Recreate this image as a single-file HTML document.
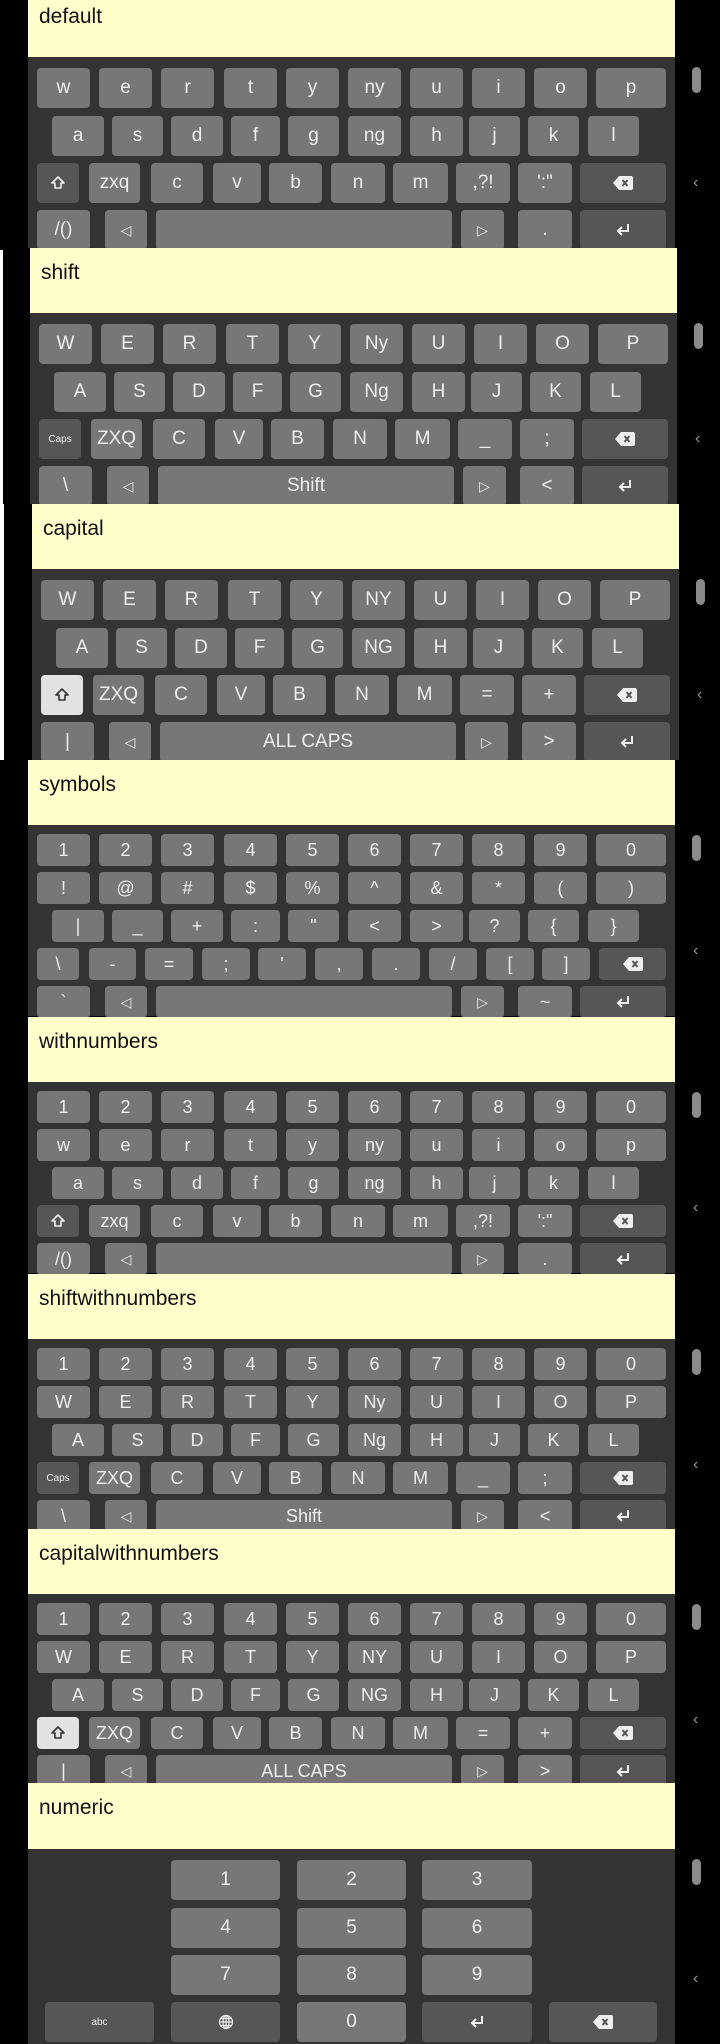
<!DOCTYPE html>
<html><head><meta charset="utf-8"><style>
*{margin:0;padding:0;box-sizing:border-box}
body{width:720px;height:2044px;background:#000;position:relative;overflow:hidden;font-family:"Liberation Sans",sans-serif}
.sec{position:absolute;left:0;width:720px;height:256px}
.y{position:absolute;left:28px;width:647px;top:0;height:65px;background:#ffffcc}
.lb{position:absolute;left:11px;top:13px;font-size:21px;line-height:24px;color:#111}
.kb{position:absolute;left:28px;width:647px;top:65px;height:191px;background:#333}
.k{position:absolute;height:40px;background:#777;border-radius:4px;color:#eee;font-size:19px;display:flex;align-items:center;justify-content:center}
.d{background:#565656}
.hl{background:#e2e2e2}
.r1{top:76px}.r2{top:124px}.r3{top:171px}.r4{top:218px}
.f{height:32px;font-size:18px}
.s1{top:74px}.s2{top:112px}.s3{top:150px}.s4{top:188px}.s5{top:226px}
.th{position:absolute;left:692px;top:75px;width:9px;height:26px;border-radius:5px;background:#8a8a8a}
.ch{position:absolute;left:693px;top:182px;color:#999;font-size:16px}
.sm{font-size:10px}
</style></head><body>

<!-- default -->
<div class="sec" style="top:-8px">
<div class="y"><div class="lb">default</div></div><div class="kb"></div>
<div class="k r1" style="left:37px;width:53px">w</div><div class="k r1" style="left:99px;width:53px">e</div><div class="k r1" style="left:161px;width:53px">r</div><div class="k r1" style="left:224px;width:53px">t</div><div class="k r1" style="left:286px;width:53px">y</div><div class="k r1" style="left:348px;width:53px">ny</div><div class="k r1" style="left:410px;width:53px">u</div><div class="k r1" style="left:472px;width:53px">i</div><div class="k r1" style="left:534px;width:53px">o</div><div class="k r1" style="left:596px;width:70px">p</div>
<div class="k r2" style="left:52px;width:52px">a</div><div class="k r2" style="left:112px;width:51px">s</div><div class="k r2" style="left:171px;width:52px">d</div><div class="k r2" style="left:231px;width:49px">f</div><div class="k r2" style="left:288px;width:51px">g</div><div class="k r2" style="left:348px;width:53px">ng</div><div class="k r2" style="left:410px;width:53px">h</div><div class="k r2" style="left:469px;width:51px">j</div><div class="k r2" style="left:528px;width:51px">k</div><div class="k r2" style="left:588px;width:51px">l</div>
<div class="k r3 d" style="left:37px;width:42px"><svg width="14" height="14" viewBox="0 0 14 14"><path d="M7 1L1 7H4V12H10V7H13Z" fill="none" stroke="#eee" stroke-width="1.6" stroke-linejoin="round"/></svg></div><div class="k r3" style="left:89px;width:51px">zxq</div><div class="k r3" style="left:151px;width:52px">c</div><div class="k r3" style="left:213px;width:48px">v</div><div class="k r3" style="left:269px;width:53px">b</div><div class="k r3" style="left:331px;width:54px">n</div><div class="k r3" style="left:393px;width:55px">m</div><div class="k r3" style="left:456px;width:54px">,?!</div><div class="k r3" style="left:518px;width:54px">':"</div><div class="k r3 d" style="left:580px;width:86px"><svg width="20" height="14" viewBox="0 0 20 14"><path d="M6 0H18a2 2 0 0 1 2 2V12a2 2 0 0 1-2 2H6L0 7Z" fill="#eee"/><path d="M9.5 4l5 6M14.5 4l-5 6" stroke="#555" stroke-width="2"/></svg></div>
<div class="k r4" style="left:37px;width:53px">/()</div><div class="k r4" style="left:105px;width:42px;font-size:14px">◁</div><div class="k r4" style="left:156px;width:296px"></div><div class="k r4" style="left:461px;width:43px;font-size:14px">▷</div><div class="k r4" style="left:518px;width:54px">.</div><div class="k r4 d" style="left:580px;width:86px"><svg width="18" height="14" viewBox="0 0 18 14"><path d="M14 1V8H4M8 4L4 8L8 12" fill="none" stroke="#eee" stroke-width="2"/></svg></div>
<div class="th"></div><div class="ch">‹</div>
</div>

<div style="position:absolute;left:0;top:250px;width:3px;height:254px;background:#fff"></div>
<div style="position:absolute;left:0;top:504px;width:4px;height:256px;background:#fff"></div>

<!-- shift -->
<div class="sec" style="top:248px;left:2px">
<div class="y"><div class="lb">shift</div></div><div class="kb"></div>
<div class="k r1" style="left:37px;width:53px">W</div><div class="k r1" style="left:99px;width:53px">E</div><div class="k r1" style="left:161px;width:53px">R</div><div class="k r1" style="left:224px;width:53px">T</div><div class="k r1" style="left:286px;width:53px">Y</div><div class="k r1" style="left:348px;width:53px">Ny</div><div class="k r1" style="left:410px;width:53px">U</div><div class="k r1" style="left:472px;width:53px">I</div><div class="k r1" style="left:534px;width:53px">O</div><div class="k r1" style="left:596px;width:70px">P</div>
<div class="k r2" style="left:52px;width:52px">A</div><div class="k r2" style="left:112px;width:51px">S</div><div class="k r2" style="left:171px;width:52px">D</div><div class="k r2" style="left:231px;width:49px">F</div><div class="k r2" style="left:288px;width:51px">G</div><div class="k r2" style="left:348px;width:53px">Ng</div><div class="k r2" style="left:410px;width:53px">H</div><div class="k r2" style="left:469px;width:51px">J</div><div class="k r2" style="left:528px;width:51px">K</div><div class="k r2" style="left:588px;width:51px">L</div>
<div class="k r3 d sm" style="left:37px;width:42px">Caps</div><div class="k r3" style="left:89px;width:51px">ZXQ</div><div class="k r3" style="left:151px;width:52px">C</div><div class="k r3" style="left:213px;width:48px">V</div><div class="k r3" style="left:269px;width:53px">B</div><div class="k r3" style="left:331px;width:54px">N</div><div class="k r3" style="left:393px;width:55px">M</div><div class="k r3" style="left:456px;width:54px">_</div><div class="k r3" style="left:518px;width:54px">;</div><div class="k r3 d" style="left:580px;width:86px"><svg width="20" height="14" viewBox="0 0 20 14"><path d="M6 0H18a2 2 0 0 1 2 2V12a2 2 0 0 1-2 2H6L0 7Z" fill="#eee"/><path d="M9.5 4l5 6M14.5 4l-5 6" stroke="#555" stroke-width="2"/></svg></div>
<div class="k r4" style="left:37px;width:53px">\</div><div class="k r4" style="left:105px;width:42px;font-size:14px">◁</div><div class="k r4" style="left:156px;width:296px">Shift</div><div class="k r4" style="left:461px;width:43px;font-size:14px">▷</div><div class="k r4" style="left:518px;width:54px">&lt;</div><div class="k r4 d" style="left:580px;width:86px"><svg width="18" height="14" viewBox="0 0 18 14"><path d="M14 1V8H4M8 4L4 8L8 12" fill="none" stroke="#eee" stroke-width="2"/></svg></div>
<div class="th"></div><div class="ch">‹</div>
</div>

<!-- capital -->
<div class="sec" style="top:504px;left:4px">
<div class="y"><div class="lb">capital</div></div><div class="kb"></div>
<div class="k r1" style="left:37px;width:53px">W</div><div class="k r1" style="left:99px;width:53px">E</div><div class="k r1" style="left:161px;width:53px">R</div><div class="k r1" style="left:224px;width:53px">T</div><div class="k r1" style="left:286px;width:53px">Y</div><div class="k r1" style="left:348px;width:53px">NY</div><div class="k r1" style="left:410px;width:53px">U</div><div class="k r1" style="left:472px;width:53px">I</div><div class="k r1" style="left:534px;width:53px">O</div><div class="k r1" style="left:596px;width:70px">P</div>
<div class="k r2" style="left:52px;width:52px">A</div><div class="k r2" style="left:112px;width:51px">S</div><div class="k r2" style="left:171px;width:52px">D</div><div class="k r2" style="left:231px;width:49px">F</div><div class="k r2" style="left:288px;width:51px">G</div><div class="k r2" style="left:348px;width:53px">NG</div><div class="k r2" style="left:410px;width:53px">H</div><div class="k r2" style="left:469px;width:51px">J</div><div class="k r2" style="left:528px;width:51px">K</div><div class="k r2" style="left:588px;width:51px">L</div>
<div class="k r3 hl" style="left:37px;width:42px"><svg width="14" height="14" viewBox="0 0 14 14"><path d="M7 1L1 7H4V12H10V7H13Z" fill="none" stroke="#333" stroke-width="1.6" stroke-linejoin="round"/></svg></div><div class="k r3" style="left:89px;width:51px">ZXQ</div><div class="k r3" style="left:151px;width:52px">C</div><div class="k r3" style="left:213px;width:48px">V</div><div class="k r3" style="left:269px;width:53px">B</div><div class="k r3" style="left:331px;width:54px">N</div><div class="k r3" style="left:393px;width:55px">M</div><div class="k r3" style="left:456px;width:54px">=</div><div class="k r3" style="left:518px;width:54px">+</div><div class="k r3 d" style="left:580px;width:86px"><svg width="20" height="14" viewBox="0 0 20 14"><path d="M6 0H18a2 2 0 0 1 2 2V12a2 2 0 0 1-2 2H6L0 7Z" fill="#eee"/><path d="M9.5 4l5 6M14.5 4l-5 6" stroke="#555" stroke-width="2"/></svg></div>
<div class="k r4" style="left:37px;width:53px">|</div><div class="k r4" style="left:105px;width:42px;font-size:14px">◁</div><div class="k r4" style="left:156px;width:296px">ALL CAPS</div><div class="k r4" style="left:461px;width:43px;font-size:14px">▷</div><div class="k r4" style="left:518px;width:54px">&gt;</div><div class="k r4 d" style="left:580px;width:86px"><svg width="18" height="14" viewBox="0 0 18 14"><path d="M14 1V8H4M8 4L4 8L8 12" fill="none" stroke="#eee" stroke-width="2"/></svg></div>
<div class="th"></div><div class="ch">‹</div>
</div>

<!-- symbols -->
<div class="sec" style="top:760px">
<div class="y"><div class="lb">symbols</div></div><div class="kb"></div>
<div class="k f s1" style="left:37px;width:53px">1</div><div class="k f s1" style="left:99px;width:53px">2</div><div class="k f s1" style="left:161px;width:53px">3</div><div class="k f s1" style="left:224px;width:53px">4</div><div class="k f s1" style="left:286px;width:53px">5</div><div class="k f s1" style="left:348px;width:53px">6</div><div class="k f s1" style="left:410px;width:53px">7</div><div class="k f s1" style="left:472px;width:53px">8</div><div class="k f s1" style="left:534px;width:53px">9</div><div class="k f s1" style="left:596px;width:70px">0</div>
<div class="k f s2" style="left:37px;width:53px">!</div><div class="k f s2" style="left:99px;width:53px">@</div><div class="k f s2" style="left:161px;width:53px">#</div><div class="k f s2" style="left:224px;width:53px">$</div><div class="k f s2" style="left:286px;width:53px">%</div><div class="k f s2" style="left:348px;width:53px">^</div><div class="k f s2" style="left:410px;width:53px">&amp;</div><div class="k f s2" style="left:472px;width:53px">*</div><div class="k f s2" style="left:534px;width:53px">(</div><div class="k f s2" style="left:596px;width:70px">)</div>
<div class="k f s3" style="left:52px;width:52px">|</div><div class="k f s3" style="left:112px;width:51px">_</div><div class="k f s3" style="left:171px;width:52px">+</div><div class="k f s3" style="left:231px;width:49px">:</div><div class="k f s3" style="left:288px;width:51px">"</div><div class="k f s3" style="left:348px;width:53px">&lt;</div><div class="k f s3" style="left:410px;width:53px">&gt;</div><div class="k f s3" style="left:469px;width:51px">?</div><div class="k f s3" style="left:528px;width:51px">{</div><div class="k f s3" style="left:588px;width:51px">}</div>
<div class="k f s4" style="left:37px;width:42px">\</div><div class="k f s4" style="left:89px;width:47px">-</div><div class="k f s4" style="left:145px;width:48px">=</div><div class="k f s4" style="left:202px;width:48px">;</div><div class="k f s4" style="left:258px;width:48px">'</div><div class="k f s4" style="left:315px;width:48px">,</div><div class="k f s4" style="left:372px;width:48px">.</div><div class="k f s4" style="left:429px;width:48px">/</div><div class="k f s4" style="left:486px;width:48px">[</div><div class="k f s4" style="left:542px;width:48px">]</div><div class="k f s4 d" style="left:599px;width:67px"><svg width="20" height="14" viewBox="0 0 20 14"><path d="M6 0H18a2 2 0 0 1 2 2V12a2 2 0 0 1-2 2H6L0 7Z" fill="#eee"/><path d="M9.5 4l5 6M14.5 4l-5 6" stroke="#555" stroke-width="2"/></svg></div>
<div class="k f s5" style="left:37px;width:53px">`</div><div class="k f s5" style="left:105px;width:42px;font-size:14px">◁</div><div class="k f s5" style="left:156px;width:296px"></div><div class="k f s5" style="left:461px;width:43px;font-size:14px">▷</div><div class="k f s5" style="left:518px;width:54px">~</div><div class="k f s5 d" style="left:580px;width:86px"><svg width="18" height="14" viewBox="0 0 18 14"><path d="M14 1V8H4M8 4L4 8L8 12" fill="none" stroke="#eee" stroke-width="2"/></svg></div>
<div class="th"></div><div class="ch">‹</div>
</div>

<!-- withnumbers -->
<div class="sec" style="top:1017px">
<div class="y"><div class="lb">withnumbers</div></div><div class="kb"></div>
<div class="k f s1" style="left:37px;width:53px">1</div><div class="k f s1" style="left:99px;width:53px">2</div><div class="k f s1" style="left:161px;width:53px">3</div><div class="k f s1" style="left:224px;width:53px">4</div><div class="k f s1" style="left:286px;width:53px">5</div><div class="k f s1" style="left:348px;width:53px">6</div><div class="k f s1" style="left:410px;width:53px">7</div><div class="k f s1" style="left:472px;width:53px">8</div><div class="k f s1" style="left:534px;width:53px">9</div><div class="k f s1" style="left:596px;width:70px">0</div>
<div class="k f s2" style="left:37px;width:53px">w</div><div class="k f s2" style="left:99px;width:53px">e</div><div class="k f s2" style="left:161px;width:53px">r</div><div class="k f s2" style="left:224px;width:53px">t</div><div class="k f s2" style="left:286px;width:53px">y</div><div class="k f s2" style="left:348px;width:53px">ny</div><div class="k f s2" style="left:410px;width:53px">u</div><div class="k f s2" style="left:472px;width:53px">i</div><div class="k f s2" style="left:534px;width:53px">o</div><div class="k f s2" style="left:596px;width:70px">p</div>
<div class="k f s3" style="left:52px;width:52px">a</div><div class="k f s3" style="left:112px;width:51px">s</div><div class="k f s3" style="left:171px;width:52px">d</div><div class="k f s3" style="left:231px;width:49px">f</div><div class="k f s3" style="left:288px;width:51px">g</div><div class="k f s3" style="left:348px;width:53px">ng</div><div class="k f s3" style="left:410px;width:53px">h</div><div class="k f s3" style="left:469px;width:51px">j</div><div class="k f s3" style="left:528px;width:51px">k</div><div class="k f s3" style="left:588px;width:51px">l</div>
<div class="k f s4 d" style="left:37px;width:42px"><svg width="14" height="14" viewBox="0 0 14 14"><path d="M7 1L1 7H4V12H10V7H13Z" fill="none" stroke="#eee" stroke-width="1.6" stroke-linejoin="round"/></svg></div><div class="k f s4" style="left:89px;width:51px">zxq</div><div class="k f s4" style="left:151px;width:52px">c</div><div class="k f s4" style="left:213px;width:48px">v</div><div class="k f s4" style="left:269px;width:53px">b</div><div class="k f s4" style="left:331px;width:54px">n</div><div class="k f s4" style="left:393px;width:55px">m</div><div class="k f s4" style="left:456px;width:54px">,?!</div><div class="k f s4" style="left:518px;width:54px">':"</div><div class="k f s4 d" style="left:580px;width:86px"><svg width="20" height="14" viewBox="0 0 20 14"><path d="M6 0H18a2 2 0 0 1 2 2V12a2 2 0 0 1-2 2H6L0 7Z" fill="#eee"/><path d="M9.5 4l5 6M14.5 4l-5 6" stroke="#555" stroke-width="2"/></svg></div>
<div class="k f s5" style="left:37px;width:53px">/()</div><div class="k f s5" style="left:105px;width:42px;font-size:14px">◁</div><div class="k f s5" style="left:156px;width:296px"></div><div class="k f s5" style="left:461px;width:43px;font-size:14px">▷</div><div class="k f s5" style="left:518px;width:54px">.</div><div class="k f s5 d" style="left:580px;width:86px"><svg width="18" height="14" viewBox="0 0 18 14"><path d="M14 1V8H4M8 4L4 8L8 12" fill="none" stroke="#eee" stroke-width="2"/></svg></div>
<div class="th"></div><div class="ch">‹</div>
</div>

<!-- shiftwithnumbers -->
<div class="sec" style="top:1274px">
<div class="y"><div class="lb">shiftwithnumbers</div></div><div class="kb"></div>
<div class="k f s1" style="left:37px;width:53px">1</div><div class="k f s1" style="left:99px;width:53px">2</div><div class="k f s1" style="left:161px;width:53px">3</div><div class="k f s1" style="left:224px;width:53px">4</div><div class="k f s1" style="left:286px;width:53px">5</div><div class="k f s1" style="left:348px;width:53px">6</div><div class="k f s1" style="left:410px;width:53px">7</div><div class="k f s1" style="left:472px;width:53px">8</div><div class="k f s1" style="left:534px;width:53px">9</div><div class="k f s1" style="left:596px;width:70px">0</div>
<div class="k f s2" style="left:37px;width:53px">W</div><div class="k f s2" style="left:99px;width:53px">E</div><div class="k f s2" style="left:161px;width:53px">R</div><div class="k f s2" style="left:224px;width:53px">T</div><div class="k f s2" style="left:286px;width:53px">Y</div><div class="k f s2" style="left:348px;width:53px">Ny</div><div class="k f s2" style="left:410px;width:53px">U</div><div class="k f s2" style="left:472px;width:53px">I</div><div class="k f s2" style="left:534px;width:53px">O</div><div class="k f s2" style="left:596px;width:70px">P</div>
<div class="k f s3" style="left:52px;width:52px">A</div><div class="k f s3" style="left:112px;width:51px">S</div><div class="k f s3" style="left:171px;width:52px">D</div><div class="k f s3" style="left:231px;width:49px">F</div><div class="k f s3" style="left:288px;width:51px">G</div><div class="k f s3" style="left:348px;width:53px">Ng</div><div class="k f s3" style="left:410px;width:53px">H</div><div class="k f s3" style="left:469px;width:51px">J</div><div class="k f s3" style="left:528px;width:51px">K</div><div class="k f s3" style="left:588px;width:51px">L</div>
<div class="k f s4 d sm" style="left:37px;width:42px">Caps</div><div class="k f s4" style="left:89px;width:51px">ZXQ</div><div class="k f s4" style="left:151px;width:52px">C</div><div class="k f s4" style="left:213px;width:48px">V</div><div class="k f s4" style="left:269px;width:53px">B</div><div class="k f s4" style="left:331px;width:54px">N</div><div class="k f s4" style="left:393px;width:55px">M</div><div class="k f s4" style="left:456px;width:54px">_</div><div class="k f s4" style="left:518px;width:54px">;</div><div class="k f s4 d" style="left:580px;width:86px"><svg width="20" height="14" viewBox="0 0 20 14"><path d="M6 0H18a2 2 0 0 1 2 2V12a2 2 0 0 1-2 2H6L0 7Z" fill="#eee"/><path d="M9.5 4l5 6M14.5 4l-5 6" stroke="#555" stroke-width="2"/></svg></div>
<div class="k f s5" style="left:37px;width:53px">\</div><div class="k f s5" style="left:105px;width:42px;font-size:14px">◁</div><div class="k f s5" style="left:156px;width:296px">Shift</div><div class="k f s5" style="left:461px;width:43px;font-size:14px">▷</div><div class="k f s5" style="left:518px;width:54px">&lt;</div><div class="k f s5 d" style="left:580px;width:86px"><svg width="18" height="14" viewBox="0 0 18 14"><path d="M14 1V8H4M8 4L4 8L8 12" fill="none" stroke="#eee" stroke-width="2"/></svg></div>
<div class="th"></div><div class="ch">‹</div>
</div>

<!-- capitalwithnumbers -->
<div class="sec" style="top:1529px">
<div class="y"><div class="lb">capitalwithnumbers</div></div><div class="kb"></div>
<div class="k f s1" style="left:37px;width:53px">1</div><div class="k f s1" style="left:99px;width:53px">2</div><div class="k f s1" style="left:161px;width:53px">3</div><div class="k f s1" style="left:224px;width:53px">4</div><div class="k f s1" style="left:286px;width:53px">5</div><div class="k f s1" style="left:348px;width:53px">6</div><div class="k f s1" style="left:410px;width:53px">7</div><div class="k f s1" style="left:472px;width:53px">8</div><div class="k f s1" style="left:534px;width:53px">9</div><div class="k f s1" style="left:596px;width:70px">0</div>
<div class="k f s2" style="left:37px;width:53px">W</div><div class="k f s2" style="left:99px;width:53px">E</div><div class="k f s2" style="left:161px;width:53px">R</div><div class="k f s2" style="left:224px;width:53px">T</div><div class="k f s2" style="left:286px;width:53px">Y</div><div class="k f s2" style="left:348px;width:53px">NY</div><div class="k f s2" style="left:410px;width:53px">U</div><div class="k f s2" style="left:472px;width:53px">I</div><div class="k f s2" style="left:534px;width:53px">O</div><div class="k f s2" style="left:596px;width:70px">P</div>
<div class="k f s3" style="left:52px;width:52px">A</div><div class="k f s3" style="left:112px;width:51px">S</div><div class="k f s3" style="left:171px;width:52px">D</div><div class="k f s3" style="left:231px;width:49px">F</div><div class="k f s3" style="left:288px;width:51px">G</div><div class="k f s3" style="left:348px;width:53px">NG</div><div class="k f s3" style="left:410px;width:53px">H</div><div class="k f s3" style="left:469px;width:51px">J</div><div class="k f s3" style="left:528px;width:51px">K</div><div class="k f s3" style="left:588px;width:51px">L</div>
<div class="k f s4 hl" style="left:37px;width:42px"><svg width="14" height="14" viewBox="0 0 14 14"><path d="M7 1L1 7H4V12H10V7H13Z" fill="none" stroke="#333" stroke-width="1.6" stroke-linejoin="round"/></svg></div><div class="k f s4" style="left:89px;width:51px">ZXQ</div><div class="k f s4" style="left:151px;width:52px">C</div><div class="k f s4" style="left:213px;width:48px">V</div><div class="k f s4" style="left:269px;width:53px">B</div><div class="k f s4" style="left:331px;width:54px">N</div><div class="k f s4" style="left:393px;width:55px">M</div><div class="k f s4" style="left:456px;width:54px">=</div><div class="k f s4" style="left:518px;width:54px">+</div><div class="k f s4 d" style="left:580px;width:86px"><svg width="20" height="14" viewBox="0 0 20 14"><path d="M6 0H18a2 2 0 0 1 2 2V12a2 2 0 0 1-2 2H6L0 7Z" fill="#eee"/><path d="M9.5 4l5 6M14.5 4l-5 6" stroke="#555" stroke-width="2"/></svg></div>
<div class="k f s5" style="left:37px;width:53px">|</div><div class="k f s5" style="left:105px;width:42px;font-size:14px">◁</div><div class="k f s5" style="left:156px;width:296px">ALL CAPS</div><div class="k f s5" style="left:461px;width:43px;font-size:14px">▷</div><div class="k f s5" style="left:518px;width:54px">&gt;</div><div class="k f s5 d" style="left:580px;width:86px"><svg width="18" height="14" viewBox="0 0 18 14"><path d="M14 1V8H4M8 4L4 8L8 12" fill="none" stroke="#eee" stroke-width="2"/></svg></div>
<div class="th"></div><div class="ch">‹</div>
</div>

<!-- numeric -->
<div class="sec" style="top:1783px;height:261px">
<div class="y" style="height:66px"><div class="lb">numeric</div></div><div class="kb" style="top:66px;height:195px"></div>
<div class="k" style="top:77px;left:171px;width:109px">1</div><div class="k" style="top:77px;left:297px;width:109px">2</div><div class="k" style="top:77px;left:422px;width:110px">3</div>
<div class="k" style="top:125px;left:171px;width:109px">4</div><div class="k" style="top:125px;left:297px;width:109px">5</div><div class="k" style="top:125px;left:422px;width:110px">6</div>
<div class="k" style="top:172px;left:171px;width:109px">7</div><div class="k" style="top:172px;left:297px;width:109px">8</div><div class="k" style="top:172px;left:422px;width:110px">9</div>
<div class="k d sm" style="top:219px;left:45px;width:109px">abc</div>
<div class="k d" style="top:219px;left:171px;width:109px"><svg width="16" height="16" viewBox="0 0 16 16" fill="none" stroke="#eee" stroke-width="1.2"><circle cx="8" cy="8" r="6.5"/><ellipse cx="8" cy="8" rx="3" ry="6.5"/><path d="M1.5 8H14.5M2.5 4.5H13.5M2.5 11.5H13.5M8 1.5V14.5"/></svg></div>
<div class="k" style="top:219px;left:297px;width:109px">0</div>
<div class="k d" style="top:219px;left:422px;width:110px"><svg width="18" height="14" viewBox="0 0 18 14"><path d="M14 1V8H4M8 4L4 8L8 12" fill="none" stroke="#eee" stroke-width="2"/></svg></div>
<div class="k d" style="top:219px;left:549px;width:108px"><svg width="20" height="14" viewBox="0 0 20 14"><path d="M6 0H18a2 2 0 0 1 2 2V12a2 2 0 0 1-2 2H6L0 7Z" fill="#eee"/><path d="M9.5 4l5 6M14.5 4l-5 6" stroke="#555" stroke-width="2"/></svg></div>
<div class="th" style="top:76px"></div><div class="ch" style="top:187px">‹</div>
</div>

</body></html>
